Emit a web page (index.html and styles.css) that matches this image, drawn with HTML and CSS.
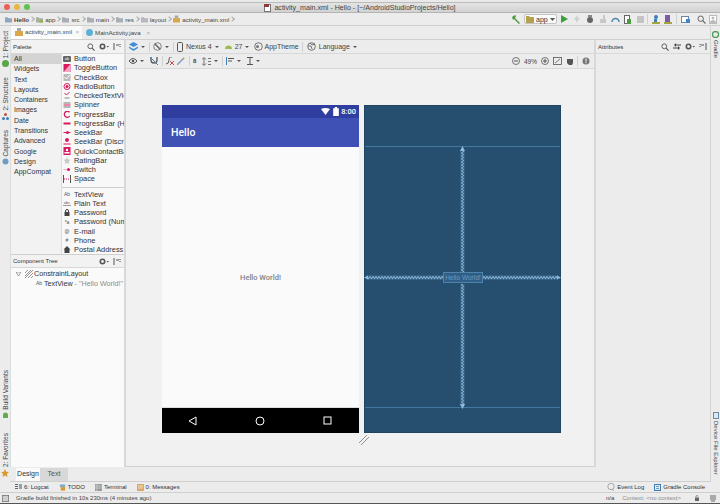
FILE: index.html
```html
<!DOCTYPE html>
<html lang="en">
<head>
    <meta charset="UTF-8">
    <title>activity_main.xml - Hello</title>
    <link rel="stylesheet" href="styles.css">
</head>
<body>

<div class="desk"></div>

<div class="titlebar">
    <div class="lights"><i class="red"></i><i class="yellow"></i><i class="green"></i></div>
    <div class="title"><svg class="ic" width="7" height="8" viewBox="0 0 7 8"><rect x="0.5" y="0.5" width="6" height="7" fill="#fff" stroke="#777"/><rect x="0" y="0" width="5" height="3" fill="#8a3b3b"/></svg>activity_main.xml - Hello - [~/AndroidStudioProjects/Hello]</div>
</div>

<div class="navbar">
    <div class="crumbs">
        <span class="crumb strong"><svg width="7" height="7" viewBox="0 0 8 7"><path d="M0 1h3l1 1h4v5H0z" fill="#8fa7bd"/></svg>Hello</span><b class="sep"></b>
        <span class="crumb"><svg width="7" height="7" viewBox="0 0 8 7"><path d="M0 1h3l1 1h4v5H0z" fill="#a9b0a2"/><rect x="4" y="4" width="4" height="3" fill="#9ab04c"/></svg>app</span><b class="sep"></b>
        <span class="crumb"><svg width="7" height="7" viewBox="0 0 8 7"><path d="M0 1h3l1 1h4v5H0z" fill="#a9aeb4"/></svg>src</span><b class="sep"></b>
        <span class="crumb"><svg width="7" height="7" viewBox="0 0 8 7"><path d="M0 1h3l1 1h4v5H0z" fill="#a9aeb4"/></svg>main</span><b class="sep"></b>
        <span class="crumb"><svg width="7" height="7" viewBox="0 0 8 7"><path d="M0 1h3l1 1h4v5H0z" fill="#a9aeb4"/></svg>res</span><b class="sep"></b>
        <span class="crumb"><svg width="7" height="7" viewBox="0 0 8 7"><path d="M0 1h3l1 1h4v5H0z" fill="#b4b8bc"/></svg>layout</span><b class="sep"></b>
        <span class="crumb"><svg width="7" height="8" viewBox="0 0 8 8"><rect y="3" width="8" height="5" fill="#d8a84a"/><rect x="2" width="4" height="3" fill="#a8a8a8"/></svg>activity_main.xml</span><b class="sep"></b>
    </div>
    <div class="runbar">
        <svg width="9" height="9" viewBox="0 0 9 9"><path d="M1 2l3-2 1 1-1 2 5 5-1 1-5-5-1 1z" fill="#4e9a3e"/></svg>
        <span class="config"><svg width="8" height="7" viewBox="0 0 8 7"><path d="M0 0h3l1 1h4v6H0z" fill="#b5a24e"/></svg>app<svg class="config-caret" width="5" height="3" viewBox="0 0 5 3"><path d="M0 0h5L2.500 3z" fill="#555"/></svg></span>
        <svg class="g35" width="7" height="8" viewBox="0 0 7 8"><path d="M0 0l7 4-7 4z" fill="#3c9f3c"/></svg>
        <svg class="g6" width="6" height="8" viewBox="0 0 6 8"><path d="M3 0L0 5h2v3l4-5H4z" fill="#cfcfcf"/></svg>
        <svg class="g6" width="8" height="8" viewBox="0 0 8 8"><ellipse cx="4" cy="5" rx="3" ry="3" fill="#666"/><rect x="2" y="0" width="4" height="2" fill="#888"/></svg>
        <svg class="g5" width="8" height="8" viewBox="0 0 8 8"><rect x="1" y="4" width="6" height="4" fill="#c8c8c8"/><rect x="4" y="0" width="2" height="4" fill="#c8c8c8"/></svg>
        <svg class="g4" width="9" height="6" viewBox="0 0 9 6"><path d="M1 6a3.500 3.500 0 0 1 7 0" fill="none" stroke="#4c86a8" stroke-width="1.500"/></svg>
        <svg class="g4" width="7" height="9" viewBox="0 0 7 9"><rect x="0.500" y="0.500" width="5" height="8" fill="#fff" stroke="#666"/><rect x="3" y="4" width="4" height="5" fill="#4e9a3e"/></svg>
        <svg class="g6" width="7" height="7" viewBox="0 0 7 7"><rect width="7" height="7" fill="#c4c4c4"/></svg>
        <i class="vline"></i>
        <svg width="8" height="9" viewBox="0 0 8 9"><circle cx="4" cy="2" r="2" fill="#3f7fb5"/><rect x="2" y="4" width="3" height="3" fill="#3f7fb5"/><rect y="7" width="8" height="2" fill="#a5a53c"/></svg>
        <svg class="g4" width="8" height="9" viewBox="0 0 8 9"><rect x="1" width="5" height="7" fill="#7a5ca8"/><rect y="7" width="8" height="2" fill="#a5a53c"/></svg>
        <i class="vline"></i>
        <svg width="9" height="8" viewBox="0 0 9 8"><rect x="0.500" y="1.500" width="7" height="6" fill="#fff" stroke="#6b8aa5"/><rect x="5" y="4" width="4" height="4" fill="#3f86c8"/></svg>
        <svg class="g7" width="9" height="9" viewBox="0 0 9 9"><circle cx="3.700" cy="3.700" r="2.700" fill="none" stroke="#666"/><path d="M5.700 5.700L8.500 8.500" stroke="#666" stroke-width="1.200"/></svg>
        <svg class="g35" width="8" height="9" viewBox="0 0 8 9"><rect x="0.500" y="0.500" width="7" height="8" fill="#fff" stroke="#bbb"/><circle cx="4" cy="3" r="1.500" fill="#bbb"/><path d="M1 8a3 3 0 0 1 6 0z" fill="#bbb"/></svg>
    </div>
</div>

<div class="workspace">
    <aside class="stripe left">
        <div class="stripe-top">
            <span class="vtext">1: Project</span>
            <svg class="s-icon" width="7" height="7" viewBox="0 0 7 7"><circle cx="3.500" cy="3.500" r="3.500" fill="#5aa64a"/></svg>
            <span class="vtext mt9">2: Structure</span>
            <svg class="s-icon" width="7" height="7" viewBox="0 0 7 7"><circle cx="3.500" cy="1.500" r="1.500" fill="#c0503c"/><circle cx="1.500" cy="5.500" r="1.500" fill="#3f7fb5"/><circle cx="5.500" cy="5.500" r="1.500" fill="#3f7fb5"/></svg>
            <span class="vtext mt9">Captures</span>
            <svg class="s-icon" width="7" height="7" viewBox="0 0 7 7"><circle cx="3.500" cy="3.500" r="3" fill="#6d9cc4"/></svg>
        </div>
        <div class="stripe-bottom">
            <span class="vtext">Build Variants</span>
            <svg class="s-icon" width="7" height="7" viewBox="0 0 7 7"><path d="M1 3a2.500 2.500 0 0 1 5 0v3H1z" fill="#6aa84f"/></svg>
            <span class="vtext mt12">2: Favorites</span>
            <svg class="s-icon" width="8" height="8" viewBox="0 0 8 8"><path d="M4 0l1.200 2.800L8 3 5.900 5l.6 3L4 6.500 1.500 8l.6-3L0 3l2.800-.2z" fill="#d99a2b"/></svg>
        </div>
    </aside>

    <div class="center">
        <div class="tabs">
            <span class="tab active"><svg width="8" height="8" viewBox="0 0 8 8"><rect y="3" width="8" height="5" fill="#d8a84a"/><rect x="2" width="4" height="3" fill="#a8a8a8"/></svg>activity_main.xml<em>×</em></span>
            <span class="tab"><svg width="7" height="7" viewBox="0 0 7 7"><circle cx="3.500" cy="3.500" r="3.500" fill="#5cb0d6"/></svg>MainActivity.java<em>×</em></span>
        </div>

        <div class="editor">
            <section class="leftpane">
                <div class="palette">
                    <div class="panel-head">
                        <span>Palette</span>
                        <span class="head-icons">
                            <svg width="8" height="8" viewBox="0 0 9 9"><circle cx="3.700" cy="3.700" r="2.700" fill="none" stroke="#555"/><path d="M5.700 5.700L8.500 8.500" stroke="#555" stroke-width="1.200"/></svg>
                            <svg width="10" height="7" viewBox="0 0 10 7"><circle cx="3.500" cy="3.500" r="2.200" fill="none" stroke="#555" stroke-width="1.600"/><path d="M7.500 3h2.500L8.750 4.500z" fill="#555"/></svg>
                            <svg width="8" height="7" viewBox="0 0 8 7"><path d="M1 0v7M3 2h3" stroke="#555"/><path d="M5 1.500h3M6 3.500h2" stroke="#999"/></svg>
                        </span>
                    </div>
                    <div class="palette-body">
                        <ul class="cats">
                            <li class="sel">All</li><li>Widgets</li><li>Text</li><li>Layouts</li><li>Containers</li><li>Images</li><li>Date</li><li>Transitions</li><li>Advanced</li><li>Google</li><li>Design</li><li>AppCompat</li>
                        </ul>
                        <div class="widgets">
                            <ul>
                                <li><i class="wi grey">ok</i>Button</li>
                                <li><svg class="wsvg" width="7" height="8" viewBox="0 0 7 8"><rect width="7" height="8" fill="#d81b60"/><path d="M0 8l7-8v8z" fill="#f2a8c4"/></svg>ToggleButton</li>
                                <li><svg class="wsvg" width="7" height="7" viewBox="0 0 7 7"><rect width="7" height="7" fill="#bbb"/><path d="M1 3l2 2 3-4" fill="none" stroke="#fff"/></svg>CheckBox</li>
                                <li><svg class="wsvg" width="7" height="7" viewBox="0 0 7 7"><circle cx="3.500" cy="3.500" r="3" fill="none" stroke="#d81b60"/><circle cx="3.500" cy="3.500" r="1.500" fill="#d81b60"/></svg>RadioButton</li>
                                <li><svg class="wsvg" width="7" height="7" viewBox="0 0 7 7"><path d="M1 1l2 2 3-3" fill="none" stroke="#d81b60"/><path d="M1 6h5" stroke="#888"/></svg>CheckedTextView</li>
                                <li><svg class="wsvg" width="7" height="6" viewBox="0 0 7 6"><path d="M0 1h7M0 5h7" stroke="#777"/><path d="M0 3h7" stroke="#d81b60"/></svg>Spinner</li>
                                <li><svg class="wsvg" width="7" height="7" viewBox="0 0 7 7"><path d="M6 1.200A3 3 0 1 0 6.300 5" fill="none" stroke="#d81b60" stroke-width="1.300"/></svg>ProgressBar</li>
                                <li><svg class="wsvg" width="7" height="3" viewBox="0 0 7 3"><rect y="0.500" width="7" height="2" fill="#d81b60"/></svg>ProgressBar (Horizontal)</li>
                                <li><svg class="wsvg" width="7" height="3" viewBox="0 0 7 3"><path d="M0 1.500h7" stroke="#d81b60"/><circle cx="4" cy="1.500" r="1.500" fill="#d81b60"/></svg>SeekBar</li>
                                <li><svg class="wsvg" width="7" height="7" viewBox="0 0 7 7"><path d="M0 6h7" stroke="#d81b60"/><circle cx="3.500" cy="2" r="2" fill="#d81b60"/></svg>SeekBar (Discrete)</li>
                                <li><svg class="wsvg" width="7" height="8" viewBox="0 0 7 8"><rect width="7" height="8" fill="#d81b60"/><circle cx="3.500" cy="3" r="1.200" fill="#fff"/><rect x="1" y="5" width="5" height="1.500" fill="#fff"/></svg>QuickContactBadge</li>
                                <li><svg class="wsvg" width="7" height="7" viewBox="0 0 8 8"><path d="M4 0l1.200 2.800L8 3 5.900 5l.6 3L4 6.500 1.500 8l.6-3L0 3l2.800-.2z" fill="#c8c8c8"/></svg>RatingBar</li>
                                <li><svg class="wsvg" width="7" height="3" viewBox="0 0 7 3"><rect x="0" y="1" width="7" height="1" fill="#f2a8c4"/><circle cx="5" cy="1.500" r="1.500" fill="#d81b60"/></svg>Switch</li>
                                <li><svg class="wsvg" width="8" height="8" viewBox="0 0 8 8"><path d="M0.500 0v8M7.500 0v8" stroke="#555"/><path d="M1 4h6" stroke="#d81b60" stroke-dasharray="1 1"/></svg>Space</li>
                            </ul>
                            <ul class="group2">
                                <li><i class="wi">Ab</i>TextView</li>
                                <li><i class="wi box">abc</i>Plain Text</li>
                                <li><svg class="wsvg" width="7" height="7" viewBox="0 0 7 7"><rect x="1" y="3" width="5" height="4" fill="#444"/><path d="M2 3V2a1.500 1.500 0 0 1 3 0v1" fill="none" stroke="#444"/></svg>Password</li>
                                <li><i class="wi">*a</i>Password (Numeric)</li>
                                <li><i class="wi">@</i>E-mail</li>
                                <li><i class="wi">#</i>Phone</li>
                                <li><svg class="wsvg" width="7" height="7" viewBox="0 0 7 7"><path d="M3.500 0L7 3.500H6V7H1V3.500H0z" fill="#444"/></svg>Postal Address</li>
                            </ul>
                        </div>
                    </div>
                </div>
                <div class="tree">
                    <div class="panel-head tree-head">
                        <span>Component Tree</span>
                        <span class="head-icons">
                            <svg width="10" height="7" viewBox="0 0 10 7"><circle cx="3.500" cy="3.500" r="2.200" fill="none" stroke="#555" stroke-width="1.600"/><path d="M7.500 3h2.500L8.750 4.500z" fill="#555"/></svg>
                            <svg width="8" height="7" viewBox="0 0 8 7"><path d="M1 0v7M3 2h3" stroke="#555"/><path d="M5 1.500h3M6 3.500h2" stroke="#999"/></svg>
                        </span>
                    </div>
                    <div class="tree-row"><svg width="5" height="4" viewBox="0 0 5 4"><path d="M0 0h5L2.500 4z" fill="none" stroke="#777" stroke-width="0.700"/></svg><svg class="hatch" width="8" height="8" viewBox="0 0 8 8"><path d="M0 3l3-3M0 6l6-6M0 8l8-8M3 8l5-5M6 8l2-2" stroke="#777" stroke-width="0.800"/></svg>ConstraintLayout</div>
                    <div class="tree-row sub"><i class="wi">Ab</i>TextView<span class="muted">- "Hello World!"</span></div>
                </div>
            </section>

            <section class="design">
                <div class="toolbar">
                    <svg width="9" height="9" viewBox="0 0 9 9"><path d="M4.500 0L9 2.500 4.500 5 0 2.500z" fill="#3f8fd6"/><path d="M0 4.500l4.500 2.500L9 4.500V6L4.500 9 0 6z" fill="#3f8fd6"/></svg><i class="caret"></i>
                    <i class="vline"></i>
                    <svg width="9" height="9" viewBox="0 0 9 9"><circle cx="4.500" cy="4.500" r="3.800" fill="none" stroke="#666" stroke-width="0.800"/><path d="M2 2l5 5" stroke="#666" stroke-width="1.500"/></svg><i class="caret"></i>
                    <i class="vline"></i>
                    <svg width="6" height="10" viewBox="0 0 6 10"><rect x="0.500" y="0.500" width="5" height="9" rx="1" fill="none" stroke="#555"/></svg>
                    <span>Nexus 4</span><i class="caret"></i>
                    <svg class="ml6" width="7" height="4" viewBox="0 0 7 4"><path d="M0 4a3.500 3.500 0 0 1 7 0z" fill="#9dbb4f"/></svg>
                    <span>27</span><i class="caret"></i>
                    <svg class="ml5" width="9" height="9" viewBox="0 0 9 9"><circle cx="4.500" cy="4.500" r="3.800" fill="none" stroke="#555" stroke-width="0.800"/><circle cx="3.500" cy="4.500" r="1.500" fill="#777"/></svg>
                    <span class="tight">AppTheme</span>
                    <i class="vline"></i>
                    <svg width="9" height="9" viewBox="0 0 9 9"><circle cx="4.500" cy="4.500" r="3.800" fill="none" stroke="#555" stroke-width="0.800"/><path d="M1 4h3l1 3M3 1l2 2 3-1" fill="none" stroke="#555" stroke-width="0.800"/></svg>
                    <span>Language</span><i class="caret"></i>
                </div>
                <div class="toolbar second">
                    <svg width="8" height="6" viewBox="0 0 8 6"><path d="M0 3q4-5 8 0q-4 5-8 0z" fill="none" stroke="#555"/><circle cx="4" cy="3" r="1.300" fill="#555"/></svg><i class="caret"></i>
                    <svg class="ml6" width="8" height="8" viewBox="0 0 8 8"><path d="M1 0v3a3 3 0 0 0 6 0V0" fill="none" stroke="#555" stroke-width="1.300"/><path d="M0 0l8 8" stroke="#3f7fb5"/></svg>
                    <i class="vline"></i>
                    <svg width="8" height="8" viewBox="0 0 8 8"><path d="M0 7q3 0 3-4t3-3" fill="none" stroke="#555"/><path d="M4 4l4 4M8 4L4 8" stroke="#c0503c"/></svg>
                    <svg class="ml3" width="8" height="8" viewBox="0 0 8 8"><path d="M0 8l6-6" stroke="#7a9cc0" stroke-width="1.300"/><path d="M6 0l1 1 1 0-1 1v1l-1-1-1 0 1-1z" fill="#d99a2b"/></svg>
                    <i class="vline"></i>
                    <span class="bold-b">8</span>
                    <svg class="ml6" width="9" height="9" viewBox="0 0 9 9"><path d="M2 1v7M0 2.500L2 .5l2 2M0 6.500l2 2 2-2M6 1.500h3M6 4.500h3M6 7.500h3" fill="none" stroke="#555" stroke-width="0.800"/></svg><i class="caret"></i>
                    <i class="vline"></i>
                    <svg width="8" height="8" viewBox="0 0 8 8"><path d="M0.500 0v8" stroke="#3f7fb5"/><path d="M2 1.500h6M2 4h4" stroke="#555" stroke-width="1.200"/></svg><i class="caret"></i>
                    <svg class="ml6" width="6" height="8" viewBox="0 0 6 8"><path d="M0 .5h6M0 7.500h6M3 1v6" stroke="#555"/></svg><i class="caret"></i>
                    <div class="zoombar">
                        <svg width="8" height="8" viewBox="0 0 8 8"><circle cx="4" cy="4" r="3.500" fill="none" stroke="#555" stroke-width="0.800"/><path d="M2 4h4" stroke="#555"/></svg>
                        <span>49%</span>
                        <svg width="8" height="8" viewBox="0 0 8 8"><circle cx="4" cy="4" r="3.500" fill="none" stroke="#555" stroke-width="0.800"/><path d="M2 4h4M4 2v4" stroke="#555"/></svg>
                        <svg width="9" height="8" viewBox="0 0 9 8"><rect x="0.500" y="0.500" width="8" height="7" fill="none" stroke="#555" stroke-width="0.800"/><path d="M2 6l5-4" stroke="#555" stroke-width="0.800"/></svg>
                        <svg width="7" height="8" viewBox="0 0 7 8"><path d="M1 3v3l2 2h3l1-2V2H1z" fill="#555"/></svg>
                        <i class="vline"></i>
                        <svg width="8" height="8" viewBox="0 0 8 8"><circle cx="4" cy="4" r="3.500" fill="#777"/><rect x="3.500" y="1.500" width="1" height="3" fill="#fff"/><rect x="3.500" y="5.200" width="1" height="1" fill="#fff"/></svg>
                    </div>
                </div>
                <div class="canvas">
                    <div class="screens">
                        <div class="phone">
                            <div class="statusbar">
                                <svg width="11" height="7" viewBox="0 0 9 7"><path d="M0 1q4.500-2 9 0L4.500 7z" fill="#fff"/></svg>
                                <svg width="6" height="9" viewBox="0 0 5 8"><path d="M1.500 0h2v1H5v7H0V1h1.500z" fill="#fff"/></svg>
                                <span>8:00</span>
                            </div>
                            <div class="appbar">Hello</div>
                            <div class="content">Hello World!</div>
                            <div class="navkeys">
                                <svg width="9" height="10" viewBox="0 0 9 10"><path d="M8 1v8L1 5z" fill="none" stroke="#fff" stroke-width="1"/></svg>
                                <svg width="10" height="10" viewBox="0 0 10 10"><circle cx="5" cy="5" r="4" fill="none" stroke="#fff" stroke-width="1"/></svg>
                                <svg width="9" height="9" viewBox="0 0 9 9"><rect x="1" y="1" width="7" height="7" fill="none" stroke="#fff" stroke-width="1"/></svg>
                            </div>
                        </div>
                        <div class="blueprint">
                            <i class="bp-top"></i>
                            <i class="bp-bottom"></i>
                            <svg class="bp-springs" width="197" height="328" viewBox="0 0 197 328">
                                <defs>
                                    <pattern id="springH" width="3" height="4" patternUnits="userSpaceOnUse" y="170.500">
                                        <path d="M0 .5L1.500 3.500 3 .5" fill="none" stroke="#86b6da" stroke-width="1.100"/>
                                    </pattern>
                                    <pattern id="springV" width="4" height="3" patternUnits="userSpaceOnUse" x="96.500">
                                        <path d="M.5 0L3.500 1.500 .5 3" fill="none" stroke="#86b6da" stroke-width="1.100"/>
                                    </pattern>
                                </defs>
                                <rect x="96.500" y="45" width="4" height="122" fill="url(#springV)"/>
                                <rect x="96.500" y="179" width="4" height="122" fill="url(#springV)"/>
                                <rect x="3" y="170.500" width="76" height="4" fill="url(#springH)"/>
                                <rect x="118" y="170.500" width="76" height="4" fill="url(#springH)"/>
                                <path d="M98.500 41l-2.500 5h5zM98.500 304l-2.500-5h5zM0 172.500l4-2v4zM197 172.500l-4-2v4z" fill="#8dbce0"/>
                            </svg>
                            <span class="bp-label">Hello World!</span>
                        </div>
                    </div>
                    <svg class="resize" width="10" height="10" viewBox="0 0 10 10"><path d="M0 8L8 0M2 10L10 2" stroke="#777" stroke-width="0.800"/></svg>
                </div>
            </section>

            <section class="attrs">
                <div class="panel-head attrs-head">
                    <span>Attributes</span>
                    <span class="head-icons">
                        <svg width="8" height="8" viewBox="0 0 9 9"><circle cx="3.700" cy="3.700" r="2.700" fill="none" stroke="#555"/><path d="M5.700 5.700L8.500 8.500" stroke="#555" stroke-width="1.200"/></svg>
                        <svg width="8" height="7" viewBox="0 0 8 7"><path d="M0 5h6M8 2H2" stroke="#444"/><path d="M5 3l2 2-2 2zM3 0L1 2l2 2z" fill="#444"/></svg>
                        <svg width="10" height="7" viewBox="0 0 10 7"><circle cx="3.500" cy="3.500" r="2.200" fill="none" stroke="#555" stroke-width="1.600"/><path d="M7.500 3h2.500L8.750 4.500z" fill="#555"/></svg>
                        <svg width="8" height="7" viewBox="0 0 8 7"><path d="M7 0v7M5 2H2" stroke="#555"/><path d="M0 1.500h3M0 3.500h2" stroke="#999"/></svg>
                    </span>
                </div>
            </section>
        </div>

        <div class="designtabs">
            <span class="dtab active">Design</span><span class="dtab">Text</span>
        </div>
    </div>

    <aside class="stripe right">
        <div class="stripe-top">
            <svg class="s-icon" width="7" height="7" viewBox="0 0 7 7"><circle cx="3.500" cy="3.500" r="3" fill="none" stroke="#4a9a5a" stroke-width="1.300"/></svg>
            <span class="vtext">Gradle</span>
        </div>
        <div class="stripe-bottom">
            <svg class="s-icon" width="6" height="7" viewBox="0 0 6 7"><rect x="0.500" y="0.500" width="5" height="6" fill="#dfe7ef" stroke="#6b8aa5"/></svg>
            <span class="vtext">Device File Explorer</span>
        </div>
    </aside>
</div>

<div class="toolwindows">
    <div class="tw-group">
        <span><svg width="7" height="6" viewBox="0 0 7 6"><path d="M0 .5h3M0 2.500h3M0 4.500h3" stroke="#666"/><rect x="4" y="0" width="3" height="5" fill="#8aa3bb"/></svg>6: Logcat</span>
        <span><svg width="7" height="7" viewBox="0 0 8 7"><rect x="1" width="6" height="3" fill="#7fa9c9"/><rect x="2" y="3" width="5" height="4" fill="#d99a2b"/></svg>TODO</span>
        <span><svg width="7" height="7" viewBox="0 0 7 7"><rect width="7" height="7" fill="#999"/><path d="M0 2h7M0 4h7M2 0v7" stroke="#ddd" stroke-width="0.600"/></svg>Terminal</span>
        <span><svg width="7" height="7" viewBox="0 0 7 7"><rect width="7" height="7" fill="#dba765"/><path d="M1 2h5M1 4h5" stroke="#f2dfc0"/></svg>0: Messages</span>
    </div>
    <div class="tw-group">
        <span><svg width="8" height="8" viewBox="0 0 8 8"><circle cx="4" cy="3.500" r="3.200" fill="none" stroke="#888" stroke-width="0.700"/><path d="M5 6l2 2" stroke="#888" stroke-width="0.700"/></svg>Event Log</span>
        <span><svg width="7" height="7" viewBox="0 0 7 7"><rect x="0.500" y="0.500" width="6" height="6" fill="#dfe7ef" stroke="#3f7fb5"/><path d="M2 2.500h3M2 4.500h3" stroke="#3f7fb5" stroke-width="0.700"/></svg>Gradle Console</span>
    </div>
</div>

<footer class="statusline">
    <svg width="7" height="7" viewBox="0 0 7 7"><rect x="0.400" y="0.400" width="6.200" height="6.200" fill="#cfcfcf" stroke="#777" stroke-width="0.800"/></svg>
    <span class="msg">Gradle build finished in 10s 230ms (4 minutes ago)</span>
    <div class="status-right">
        <span>n/a</span>
        <span class="muted ctx">Context: &lt;no context&gt;</span>
        <svg class="lock" width="5" height="6" viewBox="0 0 5 6"><rect y="2.500" width="4" height="3.500" fill="#666"/><path d="M1 2.500V1.500a1 1 0 0 1 2 0" fill="none" stroke="#666" stroke-width="0.700"/></svg>
        <svg width="6" height="7" viewBox="0 0 6 7"><rect width="6" height="5" fill="#aaa"/><rect x="1" y="5" width="4" height="2" fill="#aaa"/></svg>
    </div>
</footer>

<div class="deskbottom"></div>

</body>
</html>
```

FILE: styles.css
```css
* {
    box-sizing: border-box;
}
html, body {
    margin: 0;
    padding: 0;
}
body {
    width: 720px;
    height: 504px;
    overflow: hidden;
    display: flex;
    flex-direction: column;
    font-family: "Liberation Sans", Arial, sans-serif;
    font-size: 7px;
    color: #333;
    background-color: #ececec;
}
svg {
    display: block;
    flex: none;
}
ul {
    list-style: none;
    margin: 0;
    padding: 0;
}
i, em {
    font-style: normal;
}

.desk {
    height: 3px;
    flex: none;
    background-color: #e9e9e9;
    border-bottom: 1px solid #bcbcbc;
}
.deskbottom {
    height: 1px;
    flex: none;
    background-color: #555;
}

/* title bar */
.titlebar {
    height: 10px;
    flex: none;
    position: relative;
    display: flex;
    align-items: center;
    justify-content: center;
    background: linear-gradient(#e4e4e4, #d2d2d2);
    border-bottom: 1px solid #b4b4b4;
    font-size: 7.100px;
    color: #444;
}
.lights {
    position: absolute;
    left: 4px;
    top: 1px;
    display: flex;
    gap: 4px;
}
.lights i {
    width: 6px;
    height: 6px;
    border-radius: 50%;
}
.lights .red {
    background-color: #ec5f57;
}
.lights .yellow {
    background-color: #e5b93f;
}
.lights .green {
    background-color: #5fc24d;
}
.title {
    display: flex;
    align-items: center;
    gap: 3px;
}

/* breadcrumbs and run toolbar */
.navbar {
    height: 13px;
    flex: none;
    display: flex;
    align-items: center;
    justify-content: space-between;
    padding: 0 3px 0 5px;
    background-color: #ececec;
    border-bottom: 1px solid #cfcfcf;
}
.crumbs {
    display: flex;
    align-items: center;
    font-size: 6.200px;
    color: #444;
}
.crumb {
    display: flex;
    align-items: center;
    gap: 2px;
}
.crumb.strong {
    font-weight: bold;
}
.sep {
    width: 4px;
    height: 4px;
    margin: 0 2px 0 1px;
    border-top: 1px solid #aaa;
    border-right: 1px solid #aaa;
    transform: rotate(45deg);
}
.runbar {
    display: flex;
    align-items: center;
}
.config {
    display: flex;
    align-items: center;
    gap: 2px;
    width: 33px;
    height: 10px;
    margin-left: 4.500px;
    padding: 0 3px 0 1px;
    background-color: #fafafa;
    border: 1px solid #c4c4c4;
    border-radius: 2px;
}
.config-caret {
    margin-left: auto;
}
.g35 {
    margin-left: 3.500px;
}
.g4 {
    margin-left: 4px;
}
.g5 {
    margin-left: 5px;
}
.g6 {
    margin-left: 6px;
}
.g7 {
    margin-left: 7px;
}
.vline {
    width: 1px;
    height: 10px;
    margin: 0 3.750px;
    background-color: #d0d0d0;
    flex: none;
}

/* main area */
.workspace {
    flex: 1;
    min-height: 0;
    display: flex;
}
.stripe {
    width: 10px;
    flex: none;
    display: flex;
    flex-direction: column;
    justify-content: space-between;
    align-items: center;
    background-color: #ececec;
    font-size: 6px;
    color: #444;
}
.stripe.left {
    font-size: 6.500px;
}
.stripe-top, .stripe-bottom {
    display: flex;
    flex-direction: column;
    align-items: center;
    gap: 2px;
}
.left .stripe-top {
    padding-top: 5px;
}
.left .stripe-bottom {
    padding-bottom: 5px;
}
.right {
    width: 10px;
    border-left: 1px solid #d4d4d4;
}
.right .stripe-top {
    padding-top: 5px;
}
.right .stripe-bottom {
    padding-bottom: 7px;
}
.vtext {
    writing-mode: vertical-rl;
    white-space: nowrap;
    line-height: 9px;
}
.left .vtext {
    transform: rotate(180deg);
}
.mt9 {
    margin-top: 8px;
}
.mt12 {
    margin-top: 12px;
}

.center {
    flex: 1;
    min-width: 0;
    display: flex;
    flex-direction: column;
}
.tabs {
    height: 14px;
    flex: none;
    display: flex;
    background-color: #ececec;
    border-bottom: 1px solid #cfcfcf;
    font-size: 6.200px;
    color: #444;
}
.tab {
    display: flex;
    align-items: center;
    gap: 2px;
    padding: 0 3px 0 2px;
    width: 71px;
}
.tab svg {
    margin-left: 2px;
}
.tab em {
    margin-left: auto;
    color: #aaa;
}
.tab.active {
    width: 71px;
    margin-left: 1px;
    background-color: #fafafa;
    border-bottom: 2px solid #fff;
}
.editor {
    flex: 1;
    min-height: 0;
    display: flex;
}

/* palette and tree */
.leftpane {
    width: 116px;
    flex: none;
    display: flex;
    flex-direction: column;
    border-left: 1px solid #dcdcdc;
    border-right: 2px solid #d8d8d8;
}
.panel-head {
    height: 14px;
    flex: none;
    display: flex;
    align-items: center;
    justify-content: space-between;
    padding: 0 3px 0 2px;
    font-size: 6px;
    color: #333;
    border-bottom: 1px solid #d8d8d8;
}
.head-icons {
    display: flex;
    align-items: center;
    gap: 4px;
}
.palette {
    height: 215px;
    flex: none;
    display: flex;
    flex-direction: column;
    background-color: #f2f2f2;
    border-bottom: 1px solid #cfcfcf;
}
.palette-body {
    flex: 1;
    min-height: 0;
    display: flex;
    overflow: hidden;
}
.cats {
    width: 51px;
    flex: none;
    background-color: #f2f2f2;
    border-right: 1px solid #dcdcdc;
    font-size: 7px;
}
.cats li {
    height: 10.300px;
    line-height: 10.300px;
    padding-left: 3px;
}
.cats .sel {
    background-color: #d4d4d4;
}
.widgets {
    flex: 1;
    min-width: 0;
    overflow: hidden;
    background-color: #f8f8f8;
    font-size: 7.400px;
}
.widgets li {
    height: 9.250px;
    display: flex;
    align-items: center;
    white-space: nowrap;
    padding-left: 1px;
}
.group2 {
    margin-top: 3px;
    padding-top: 2px;
    border-top: 1px solid #cfcfcf;
}
.wi {
    width: 8px;
    flex: none;
    margin-right: 3px;
    font-size: 5px;
    text-align: center;
    color: #555;
}
.wi.grey {
    background-color: #666;
    color: #fff;
    height: 6px;
    line-height: 6px;
    border-radius: 1px;
    font-size: 4px;
}
.wi.box {
    border-bottom: 1px solid #999;
    font-size: 4px;
}
.wsvg {
    width: 8px;
    margin-right: 3px;
}
.tree {
    flex: 1;
    min-height: 0;
    background-color: #fafafa;
    font-size: 7.200px;
}
.tree-head {
    height: 13px;
    background-color: #f2f2f2;
}
.tree-row {
    height: 9.500px;
    display: flex;
    align-items: center;
    padding-left: 5px;
    white-space: nowrap;
}
.tree-head + .tree-row {
    margin-top: 1px;
}
.hatch {
    margin: 0 1px 0 4px;
}
.tree-row .wi {
    margin-right: 1px;
}
.tree-row.sub {
    padding-left: 24px;
}
.muted {
    color: #8a8a8a;
    margin-left: 2px;
}

/* design surface */
.design {
    flex: 1;
    min-width: 0;
    display: flex;
    flex-direction: column;
}
.toolbar {
    height: 14px;
    flex: none;
    display: flex;
    align-items: center;
    padding-left: 3px;
    font-size: 7px;
    color: #444;
    background-color: #ececec;
    border-bottom: 1px solid #d8d8d8;
}
.toolbar span {
    margin-left: 3px;
}
.toolbar span.tight {
    margin-left: 1px;
}
.toolbar .vline {
    margin: 0 3.500px;
}
.toolbar.second {
    height: 15px;
}
.caret {
    width: 0;
    height: 0;
    margin-left: 3px;
    border-left: 2px solid transparent;
    border-right: 2px solid transparent;
    border-top: 2.500px solid #555;
    flex: none;
}
.ml3 {
    margin-left: 3px;
}
.ml5 {
    margin-left: 5px;
}
.ml6 {
    margin-left: 6px;
}
.toolbar span.bold-b {
    margin-left: 0;
    font-weight: bold;
    font-size: 6px;
}
.zoombar {
    margin-left: auto;
    display: flex;
    align-items: center;
    gap: 4px;
    padding-right: 4px;
}
.toolbar .zoombar span {
    margin-left: 0;
    font-size: 6.500px;
}
.toolbar .zoombar .vline {
    margin: 0;
}
.canvas {
    flex: 1;
    min-height: 0;
    position: relative;
    background-color: #f1f1f1;
    padding: 36px 0 0 36px;
    border-bottom: 1px solid #d0d0d0;
}
.screens {
    display: flex;
    gap: 5px;
}
.phone, .blueprint {
    width: 197px;
    height: 328px;
}
.phone {
    display: flex;
    flex-direction: column;
    background-color: #fafafa;
}
.statusbar {
    height: 13px;
    flex: none;
    display: flex;
    align-items: center;
    justify-content: flex-end;
    gap: 2px;
    padding-right: 3px;
    background-color: #303f9f;
    color: #fff;
    font-size: 7.500px;
    font-family: Roboto, "Liberation Sans", sans-serif;
    font-weight: 500;
}
.appbar {
    height: 29px;
    flex: none;
    display: flex;
    align-items: center;
    padding-left: 9px;
    background-color: #3f51b5;
    color: #fff;
    font-family: Roboto, "Liberation Sans", sans-serif;
    font-size: 10.500px;
    font-weight: 500;
}
.content {
    flex: 1;
    display: flex;
    align-items: center;
    justify-content: center;
    color: #808080;
    font-size: 7.500px;
    font-weight: 500;
    font-family: Roboto, "Liberation Sans", sans-serif;
    border-bottom: 1px solid #ddd;
}
.navkeys {
    height: 25px;
    flex: none;
    display: flex;
    align-items: center;
    justify-content: space-between;
    padding: 0 27px 0 26px;
    background-color: #000;
}
.blueprint {
    position: relative;
    background-color: #254e6f;
    border: 1px solid #1f4563;
}
.bp-top, .bp-bottom {
    position: absolute;
    left: 0;
    right: 0;
    height: 1px;
    background-color: #42779e;
}
.bp-top {
    top: 40px;
}
.bp-bottom {
    top: 301px;
}
.bp-springs {
    position: absolute;
    left: -1px;
    top: -1px;
}
.bp-label {
    position: absolute;
    left: 78px;
    top: 166px;
    width: 40px;
    height: 11px;
    line-height: 9px;
    text-align: center;
    font-size: 6.500px;
    color: #6a9ac2;
    background-color: #2f5f86;
    border: 1px solid #4f83ac;
}
.resize {
    position: absolute;
    left: 233px;
    top: 366px;
}

/* attributes */
.attrs {
    width: 116px;
    flex: none;
    background-color: #ececec;
    border-left: 2px solid #d8d8d8;
}
.attrs-head {
    background-color: #ececec;
}

.designtabs {
    height: 15px;
    flex: none;
    display: flex;
    padding-left: 6px;
    padding-top: 1px;
    background-color: #ececec;
    border-bottom: 1px solid #cfcfcf;
    font-size: 7px;
}
.dtab {
    width: 28px;
    text-align: center;
    line-height: 12px;
    color: #555;
    background-color: #d8d8d8;
}
.dtab.active {
    width: 24px;
    background-color: #fafafa;
    color: #333;
}

/* bottom bars */
.toolwindows {
    height: 11px;
    flex: none;
    display: flex;
    align-items: center;
    justify-content: space-between;
    padding: 0 15px 0 15px;
    font-size: 6px;
    border-bottom: 1px solid #cfcfcf;
}
.tw-group {
    display: flex;
    gap: 10px;
}
.tw-group span {
    display: flex;
    align-items: center;
    gap: 2px;
}
.statusline {
    height: 10px;
    flex: none;
    display: flex;
    align-items: center;
    padding: 0 4px 0 2px;
    font-size: 6px;
    color: #444;
}
.msg {
    margin-left: 7px;
}
.status-right {
    margin-left: auto;
    display: flex;
    align-items: center;
    gap: 10px;
}
.status-right .muted {
    margin-left: 0;
}
.ctx {
    margin-right: 4px;
}
.status-right span:first-child {
    margin-right: -2px;
}
```
